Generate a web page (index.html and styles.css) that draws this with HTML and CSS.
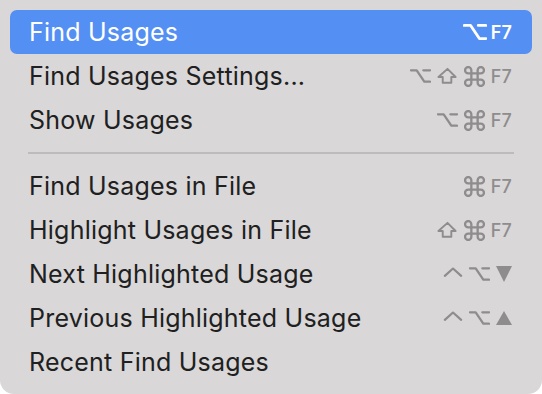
FILE: index.html
```html
<!DOCTYPE html>
<html lang="en">
<head>
    <meta charset="UTF-8">
    <meta name="viewport" content="width=device-width, initial-scale=1.0">
    <title>Find Usages menu</title>

    <link rel="stylesheet" href="styles.css">

</head>
<body>

    <div class="menu">
        <div class="item active">
            <span class="label">Find Usages</span>
            <span class="keys">
                <svg class="key opt" viewBox="0 0 22 18"><path d="M1 3h6l8 12h6M14 3h7"/></svg>
                <span class="fkey">F7</span>
            </span>
        </div>

        <div class="item">
            <span class="label">Find Usages Settings...</span>
            <span class="keys">
                <svg class="key opt" viewBox="0 0 22 18"><path d="M1 3h6l8 12h6M14 3h7"/></svg>
                <svg class="key shift" viewBox="0 0 22 18"><path d="M11 1.5l8.5 8.5h-4.5v6h-9v-6h-4.5z"/></svg>
                <svg class="key cmd" viewBox="2 2 20 20"><path d="M15 6v12a3 3 0 1 0 3-3H6a3 3 0 1 0 3 3V6a3 3 0 1 0-3 3h12a3 3 0 1 0-3-3"/></svg>
                <span class="fkey">F7</span>
            </span>
        </div>

        <div class="item">
            <span class="label">Show Usages</span>
            <span class="keys">
                <svg class="key opt" viewBox="0 0 22 18"><path d="M1 3h6l8 12h6M14 3h7"/></svg>
                <svg class="key cmd" viewBox="2 2 20 20"><path d="M15 6v12a3 3 0 1 0 3-3H6a3 3 0 1 0 3 3V6a3 3 0 1 0-3 3h12a3 3 0 1 0-3-3"/></svg>
                <span class="fkey">F7</span>
            </span>
        </div>

        <div class="separator"></div>

        <div class="item">
            <span class="label">Find Usages in File</span>
            <span class="keys">
                <svg class="key cmd" viewBox="2 2 20 20"><path d="M15 6v12a3 3 0 1 0 3-3H6a3 3 0 1 0 3 3V6a3 3 0 1 0-3 3h12a3 3 0 1 0-3-3"/></svg>
                <span class="fkey">F7</span>
            </span>
        </div>

        <div class="item">
            <span class="label">Highlight Usages in File</span>
            <span class="keys">
                <svg class="key shift" viewBox="0 0 22 18"><path d="M11 1.5l8.5 8.5h-4.5v6h-9v-6h-4.5z"/></svg>
                <svg class="key cmd" viewBox="2 2 20 20"><path d="M15 6v12a3 3 0 1 0 3-3H6a3 3 0 1 0 3 3V6a3 3 0 1 0-3 3h12a3 3 0 1 0-3-3"/></svg>
                <span class="fkey">F7</span>
            </span>
        </div>

        <div class="item">
            <span class="label">Next Highlighted Usage</span>
            <span class="keys">
                <svg class="key ctrl" viewBox="0 0 22 18"><path d="M2 11l9-8 9 8"/></svg>
                <svg class="key opt" viewBox="0 0 22 18"><path d="M1 3h6l8 12h6M14 3h7"/></svg>
                <svg class="key arrow" viewBox="0 0 16 16"><path d="M0 0h16l-8 16z"/></svg>
            </span>
        </div>

        <div class="item">
            <span class="label">Previous Highlighted Usage</span>
            <span class="keys">
                <svg class="key ctrl" viewBox="0 0 22 18"><path d="M2 11l9-8 9 8"/></svg>
                <svg class="key opt" viewBox="0 0 22 18"><path d="M1 3h6l8 12h6M14 3h7"/></svg>
                <svg class="key arrow" viewBox="0 0 16 16"><path d="M8 1l8 14H0z"/></svg>
            </span>
        </div>

        <div class="item">
            <span class="label">Recent Find Usages</span>
        </div>
    </div>

</body>
</html>
```

FILE: styles.css
```css
html, body {
margin: 0;
padding: 0;
background: #ffffff;
}

.menu {
width: 542px;
height: 394px;
box-sizing: border-box;
padding: 10px 10px 9px 10px;
background: #d9d7d8;
border-radius: 0 0 14px 14px;
font-family: Inter, "Noto Sans", sans-serif;
color: #202020;
}

.item {
height: 44px;
display: flex;
align-items: center;
justify-content: space-between;
padding: 0 20px 0 19px;
border-radius: 7px;
}

.item.active {
background: #548ff3;
color: #ffffff;
}

.label {
font-size: 25px;
letter-spacing: 0.22px;
}

.keys {
display: flex;
align-items: center;
gap: 6px;
color: #8e8c8d;
}

.item.active .keys {
color: #ffffff;
gap: 4px;
}

.key {
width: 21px;
height: 18px;
fill: none;
stroke: currentColor;
stroke-width: 2.4;
stroke-linejoin: round;
stroke-linecap: round;
}

.item.active .key.opt {
width: 24px;
height: 20px;
stroke-width: 2.6;
}

.key.cmd {
width: 21px;
height: 21px;
stroke-width: 2.2;
}

.key.shift {
stroke-width: 2;
}

.key.ctrl {
width: 20px;
}

.key.arrow {
width: 16px;
height: 16px;
fill: currentColor;
stroke: none;
}

.fkey {
font-size: 18px;
font-weight: 500;
letter-spacing: 0.2px;
}

.item.active .fkey {
font-weight: 600;
}

.separator {
height: 2px;
margin: 10px 18px;
background: #bdbbbc;
}
```
